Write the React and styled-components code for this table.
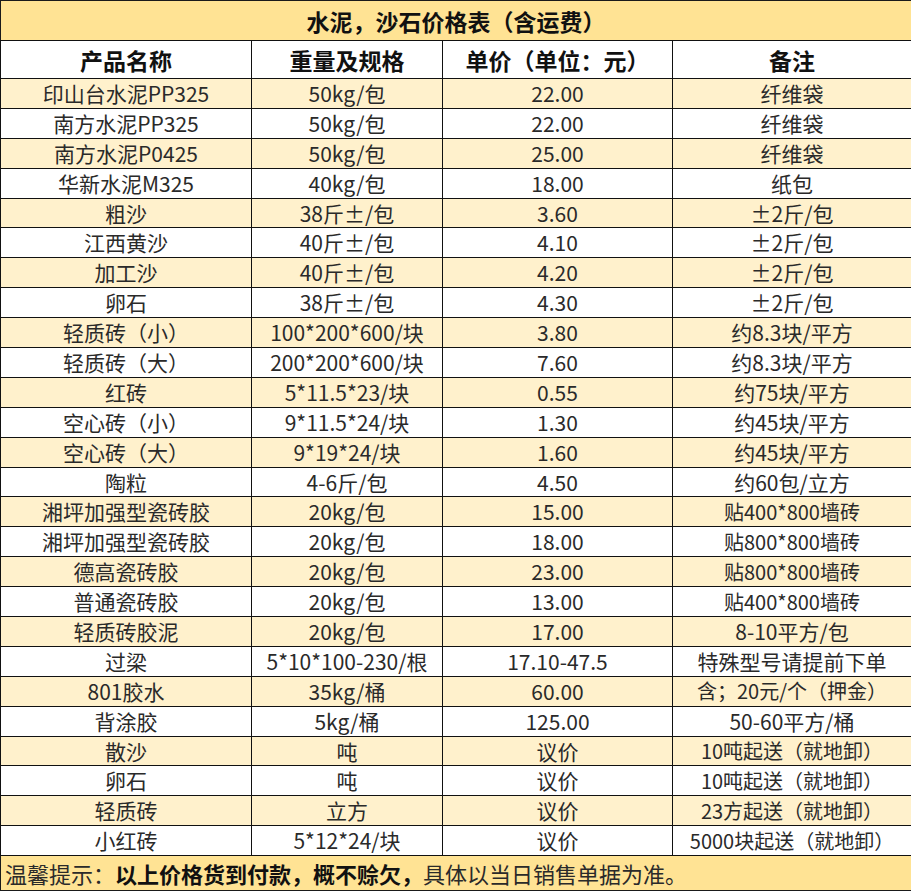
import styled, { createGlobalStyle } from 'styled-components';

const GlobalStyle = createGlobalStyle`
  html, body {
    margin: 0;
    padding: 0;
    background: #fff;
  }
  body {
    font-family: "Noto Sans CJK SC", "Noto Sans", sans-serif;
  }
`;

const rows = [
  ['印山台水泥PP325', '50kg/包', '22.00', '纤维袋'],
  ['南方水泥PP325', '50kg/包', '22.00', '纤维袋'],
  ['南方水泥P0425', '50kg/包', '25.00', '纤维袋'],
  ['华新水泥M325', '40kg/包', '18.00', '纸包'],
  ['粗沙', '38斤±/包', '3.60', '±2斤/包'],
  ['江西黄沙', '40斤±/包', '4.10', '±2斤/包'],
  ['加工沙', '40斤±/包', '4.20', '±2斤/包'],
  ['卵石', '38斤±/包', '4.30', '±2斤/包'],
  ['轻质砖（小）', '100*200*600/块', '3.80', '约8.3块/平方'],
  ['轻质砖（大）', '200*200*600/块', '7.60', '约8.3块/平方'],
  ['红砖', '5*11.5*23/块', '0.55', '约75块/平方'],
  ['空心砖（小）', '9*11.5*24/块', '1.30', '约45块/平方'],
  ['空心砖（大）', '9*19*24/块', '1.60', '约45块/平方'],
  ['陶粒', '4-6斤/包', '4.50', '约60包/立方'],
  ['湘坪加强型瓷砖胶', '20kg/包', '15.00', '贴400*800墙砖'],
  ['湘坪加强型瓷砖胶', '20kg/包', '18.00', '贴800*800墙砖'],
  ['德高瓷砖胶', '20kg/包', '23.00', '贴800*800墙砖'],
  ['普通瓷砖胶', '20kg/包', '13.00', '贴400*800墙砖'],
  ['轻质砖胶泥', '20kg/包', '17.00', '8-10平方/包'],
  ['过梁', '5*10*100-230/根', '17.10-47.5', '特殊型号请提前下单'],
  ['801胶水', '35kg/桶', '60.00', '含；20元/个（押金）'],
  ['背涂胶', '5kg/桶', '125.00', '50-60平方/桶'],
  ['散沙', '吨', '议价', '10吨起送（就地卸）'],
  ['卵石', '吨', '议价', '10吨起送（就地卸）'],
  ['轻质砖', '立方', '议价', '23方起送（就地卸）'],
  ['小红砖', '5*12*24/块', '议价', '5000块起送（就地卸）'],
];

const Sheet = styled.table`
  width: 911px;
  height: 891px;
  border-collapse: collapse;
  table-layout: fixed;
  border: 1px solid #1a1a1a;
`;

const TitleCell = styled.th`
  height: 39px;
  padding: 0;
  background: #ffe394;
  color: #111;
  font-size: 23px;
  font-weight: 700;
  text-align: center;
  border-bottom: 1px solid #111;
`;

const HeadCell = styled.th`
  height: 37px;
  padding: 0;
  background: #fff;
  color: #111;
  font-size: 23px;
  font-weight: 700;
  text-align: center;
  border: 1px solid #111;
`;

const Row = styled.tr`
  height: 29.9px;
  background: ${p => (p.$shaded ? '#fff1cc' : '#fff')};
`;

const Cell = styled.td`
  padding: 0;
  font-size: 21px;
  line-height: 1;
  color: #2a2a2a;
  text-align: center;
  white-space: nowrap;
  border: 1px solid #111;
`;

const NoteCell = styled(Cell)`
  font-size: ${p => (p.$tight ? '20px' : '21px')};
`;

const FooterCell = styled.td`
  height: 34px;
  padding: 0 0 0 4px;
  background: #ffe394;
  color: #2a2a2a;
  font-size: 22px;
  text-align: left;
  white-space: nowrap;
  border-top: 1px solid #111;
`;

const Strong = styled.b`
  font-weight: 700;
  color: #111;
`;

export default function App() {
  return (
    <>
      <GlobalStyle />
      <Sheet>
        <colgroup>
          <col style={{ width: 251 }} />
          <col style={{ width: 191 }} />
          <col style={{ width: 230 }} />
          <col style={{ width: 239 }} />
        </colgroup>
        <thead>
          <tr>
            <TitleCell colSpan={4}>水泥，沙石价格表（含运费）</TitleCell>
          </tr>
          <tr>
            <HeadCell>产品名称</HeadCell>
            <HeadCell>重量及规格</HeadCell>
            <HeadCell>单价（单位：元）</HeadCell>
            <HeadCell>备注</HeadCell>
          </tr>
        </thead>
        <tbody>
          {rows.map((r, i) => (
            <Row key={i} $shaded={i % 2 === 0}>
              <Cell>{r[0]}</Cell>
              <Cell>{r[1]}</Cell>
              <Cell>{r[2]}</Cell>
              <NoteCell $tight={r[3].length > 9}>{r[3]}</NoteCell>
            </Row>
          ))}
          <tr>
            <FooterCell colSpan={4}>
              温馨提示：<Strong>以上价格货到付款，概不赊欠，</Strong>具体以当日销售单据为准。
            </FooterCell>
          </tr>
        </tbody>
      </Sheet>
    </>
  );
}
